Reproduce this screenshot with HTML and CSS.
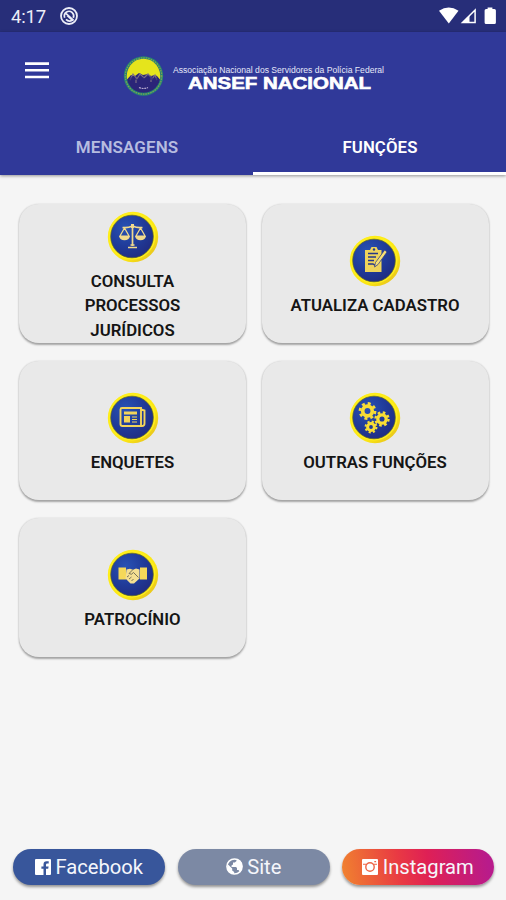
FILE: index.html
```html
<!DOCTYPE html>
<html lang="pt-BR">
<head>
<meta charset="utf-8">
<title>ANSEF Nacional</title>
<link rel="stylesheet" href="styles.css">
</head>
<body>
<svg class="defs" width="0" height="0" aria-hidden="true">
  <defs>
    <radialGradient id="blue" cx=".35" cy=".3" r=".75"><stop offset="0" stop-color="#2852b4"/><stop offset=".6" stop-color="#203a98"/><stop offset="1" stop-color="#202c82"/></radialGradient>
    <linearGradient id="gold" x1="0" y1="0" x2="1" y2="1"><stop offset="0" stop-color="#fff21c"/><stop offset=".65" stop-color="#fbe514"/><stop offset="1" stop-color="#dfb520"/></linearGradient>
    <g id="disc">
      <circle cx="26" cy="26" r="25.2" fill="url(#gold)"/>
      <circle cx="25" cy="25" r="22.7" fill="none" stroke="#ffef1c" stroke-width="1.6"/>
      <circle cx="25" cy="25.5" r="21.3" fill="url(#blue)" stroke="#55602f" stroke-width=".7"/>
    </g>
  </defs>
</svg>
<div class="app">
  <div class="status">
    <span class="time">4:17</span>
    <svg class="sync" width="18" height="18" viewBox="0 0 18 18" fill="none" stroke="#eceef8"><circle cx="9" cy="9" r="8" stroke-width="1.8"/><path d="M4.700 10.800A4.700 4.700 0 0 1 12 5.400a4.700 4.700 0 0 1 1.300 5.400M5 5.600l8.600 7.800M7.100 8.300l5.100 4.900q-3.400 2-6.200-.9" stroke-width="1.700"/></svg>
    <svg class="signals" width="58" height="18" viewBox="0 0 58 18"><path d="M0 3.700Q9.800-2.800 19.500 3.700L9.800 16.500Z" fill="#fff"/><path d="M36.100 3v12.500H23.500Z" fill="none" stroke="#fff" stroke-width="1.500"/><path d="M30.500 8.700V15.500H23.500Z" fill="#fff"/><path d="M48.600.5h4.800V2h2q1.500 0 1.500 1.500v12q0 1.500-1.500 1.500h-8.300q-1.500 0-1.500-1.500v-12Q45.600 2 47.100 2h1.500Z" fill="#fff"/></svg>
  </div>
  <header class="header">
    <div class="toolbar">
      <svg class="menu" width="24" height="17" viewBox="0 0 24 17"><path d="M0 1.600h24M0 8.300h24M0 15h24" stroke="#fff" stroke-width="2.600"/></svg>
      <svg class="brand" width="264" height="42" viewBox="0 0 264 42">
        <circle cx="20.500" cy="21" r="19.700" fill="#258773"/>
        <circle cx="20.500" cy="21" r="18.200" fill="none" stroke="#7f9f50" stroke-width="1.300" stroke-dasharray="1.500 1"/>
        <circle cx="20.500" cy="21" r="16.800" fill="#2b2578"/>
        <path d="M4 24.500A16.800 17.500 0 1 1 37 24.500l-3-3.500-2-1-4 1-3-2-5 1-4-2-4 3-4-1Z" fill="#e5e41c"/>
        <path d="M7 25l3-6 4 5 3-5 4 4 4-4 4 5 3-4 2 5M13 22v6M28 21v6" fill="none" stroke="#7c7086" stroke-width="1.200"/>
        <path d="M6 24l4-3 4 3 4-3 5 3 4-3 4 3 4-2v3H6Z" fill="#2b2578" opacity=".65"/>
        <path d="M16 32.500q4.500 2 9 0" fill="none" stroke="#b3a5ce" stroke-width="1.200" stroke-dasharray="2 .7"/>
        <text class="tagline" x="50" y="18" textLength="211" lengthAdjust="spacingAndGlyphs">Associação Nacional dos Servidores da Polícia Federal</text>
        <text class="name" x="65" y="33.500" textLength="183" lengthAdjust="spacingAndGlyphs">ANSEF NACIONAL</text>
      </svg>
    </div>
    <nav class="tabs"><a class="tab">MENSAGENS</a><a class="tab active">FUNÇÕES</a></nav>
  </header>
  <main class="grid">
    <a class="card">
      <svg class="icon" width="52" height="52" viewBox="0 0 52 52"><use href="#disc"/><g fill="none" stroke="#f1d98d" stroke-width="1.700"><path d="M25.500 14v21M15.500 16.500q5 .8 10-1.500 5 2.300 10 1.500M21 36.500h9M23.500 34h4"/><path d="M17.500 17l-4.500 8h9ZM33.500 17l-4.500 8h9Z" stroke-width="1.200"/></g><path d="M12 25h11q-1 4.300-5.500 4.300T12 25ZM28 25h11q-1 4.300-5.500 4.300T28 25ZM24 13h3v4h-3Z" fill="#f1d98d"/></svg>
      <span>CONSULTA<br>PROCESSOS<br>JURÍDICOS</span>
    </a>
    <a class="card">
      <svg class="icon" width="52" height="52" viewBox="0 0 52 52"><use href="#disc"/><path d="M16 15h5l1.500-3h5l1.500 3h3.500v4l-5 8v2l5-4v12H16Z" fill="#efd45b"/><circle cx="25" cy="14.500" r="1.200" fill="#233b91"/><path d="M19 18.500h10M19 22h8M19 25.500h6M19 29h5l3 2" stroke="#26378a" stroke-width="1.300" fill="none"/><path d="M38 17L29 29.500l-3.500 2.500 1-4.500L35.700 15Z" fill="#f7df74" stroke="#26378a" stroke-width=".7"/></svg>
      <span>ATUALIZA CADASTRO</span>
    </a>
    <a class="card">
      <svg class="icon" width="52" height="52" viewBox="0 0 52 52"><use href="#disc"/><path d="M15 16h19v18H15.500q-2 0-2-2V17.500q0-1.500 1.500-1.500ZM34 17.500l3.500 1v13q0 2.500-2.500 2.500h-1" fill="none" stroke="#f3d45a" stroke-width="1.900"/><path d="M17 19.500h13v3H17ZM17 24h6v6.500h-6Z" fill="#f3d45a"/><path d="M25 25h5M25 27.500h5M25 30h5" stroke="#f3d45a" stroke-width="1.200"/></svg>
      <span>ENQUETES</span>
    </a>
    <a class="card">
      <svg class="icon" width="52" height="52" viewBox="0 0 52 52"><use href="#disc"/><g fill="none" stroke="#f8dd35"><circle cx="18.500" cy="19" r="4.800" stroke-width="3.700"/><circle cx="18.500" cy="19" r="7.500" stroke-width="2.800" stroke-dasharray="2.945 2.945"/><circle cx="33" cy="27" r="4.200" stroke-width="3.300"/><circle cx="33" cy="27" r="6.500" stroke-width="2.400" stroke-dasharray="2.553 2.553"/><circle cx="22" cy="35" r="3.400" stroke-width="3"/><circle cx="22" cy="35" r="5.400" stroke-width="2.100" stroke-dasharray="2.121 2.121"/></g></svg>
      <span>OUTRAS FUNÇÕES</span>
    </a>
    <a class="card">
      <svg class="icon" width="52" height="52" viewBox="0 0 52 52"><use href="#disc"/><path d="M11.500 18.500h7.500v12h-7.500ZM33 18.500h7v12h-7Z" fill="#f5d859"/><path d="M19.500 20.500l3.500-.8 3 1 3-1.200 3.500 1v9L27 34.500h-3.500l-5-5Z" fill="#f5df92"/><path d="M26 20.500l-4 4q2.500 2 4.500-1l5 5M20 28l2-1.500M22 30l2.500-2M24.500 32l2-2" fill="none" stroke="#6c6750" stroke-width=".9"/></svg>
      <span>PATROCÍNIO</span>
    </a>
  </main>
  <footer class="social">
    <a class="pill facebook"><svg width="16" height="16" viewBox="0 0 16 16"><path d="M1 0h14q1 0 1 1v14q0 1-1 1h-4V9.800h2.200l.4-2.400H11V5.800q0-1.200 1.200-1.200h1.500V2.300h-2.200Q8.500 2.300 8.500 5.500v1.900H6.400v2.400h2.100V16H1q-1 0-1-1V1q0-1 1-1Z" fill="#fff"/></svg>Facebook</a>
    <a class="pill site"><svg width="17" height="17" viewBox="0 0 17 17"><circle cx="8.500" cy="8.500" r="7.600" fill="none" stroke="#fff" stroke-width="1.500"/><path d="M1.500 6l4.700 4.500v2l2 1.500v2.300Q2.500 15.700 1.200 10ZM10.500 1v2L8.800 4.500H7v2L5.500 7.500v1.400H10l1 1v2h1.500l1.500 2q3-3.500 2-8Q15 2 10.500 1Z" fill="#fff"/></svg>Site</a>
    <a class="pill instagram"><svg width="16" height="16" viewBox="0 0 16 16"><rect width="16" height="16" rx="1" fill="#fff"/><circle cx="8" cy="8" r="4.200" fill="none" stroke="#ed6546" stroke-width="1.400"/><path d="M1 5.200h3.500M11.500 5.200H15M12.300 2.600h1.800" stroke="#ed6546" stroke-width="1.100"/></svg>Instagram</a>
  </footer>
</div>
</body>
</html>
```
FILE: styles.css
```css
* { box-sizing: border-box; }
body { margin: 0; font-family: Roboto, "Liberation Sans", sans-serif; background: #f5f5f5; }
.defs { display: block; height: 0; }
.app { height: 900px; display: flex; flex-direction: column; overflow: hidden; }
.status { height: 32px; background: #272e79; display: flex; align-items: center; padding: 0 9px 0 11px; color: #eceef8; }
.time { font-size: 18.500px; letter-spacing: -0.200px; width: 49px; padding-top: 1px; }
.signals { margin-left: auto; }
.header { height: 143px; background: #303999; box-shadow: 0 1px 3px rgba(0, 0, 0, .4); display: flex; flex-direction: column; }
.toolbar { height: 88px; display: flex; align-items: center; padding-left: 25px; }
.menu { margin-top: -11px; margin-right: 74px; }
.brand { overflow: visible; }
.tagline { font: 8.500px "Liberation Sans", sans-serif; fill: #e6e8f8; }
.name { font: bold 16.500px "Liberation Sans", sans-serif; fill: #fff; stroke: #fff; stroke-width: .6px; }
.tabs { flex: 1; display: flex; }
.tab { flex: 1; display: flex; justify-content: center; align-items: center; padding: 1px 0 0 1px; border-bottom: 3px solid transparent; font-size: 17px; letter-spacing: .1px; font-weight: 600; color: #b6bce0; }
.tab.active { font-size: 16.800px; color: #fff; border-color: #fff; }
.grid { flex: 1; display: grid; grid-template-columns: 227px 227px; grid-auto-rows: 139.500px; column-gap: 15.500px; row-gap: 17.500px; padding: 28.500px 0 0 19px; }
.card { border-radius: 20px; background: #e9e9e9; box-shadow: 0 1.500px 2px rgba(0, 0, 0, .32), 0 0 2px rgba(0, 0, 0, .1); display: flex; flex-direction: column; align-items: center; justify-content: center; padding-top: 7px; text-align: center; font-size: 16.800px; line-height: 24.800px; font-weight: 600; color: #151515; }
.icon { margin-bottom: 6px; flex: none; }
.social { display: flex; gap: 12.500px; padding: 0 12px 15.500px 13px; }
.pill { flex: 1; height: 36px; border-radius: 18px; display: flex; align-items: center; justify-content: center; gap: 4.500px; color: #f5f6fb; font-size: 20.200px; box-shadow: 0 2px 3px rgba(0, 0, 0, .4); }
.facebook { background: #38569b; }
.site { background: #7c89a4; }
.instagram { background: linear-gradient(80deg, #f08030 2%, #e93a43 38%, #df2055 57%, #b81b8b 95%); }
```
